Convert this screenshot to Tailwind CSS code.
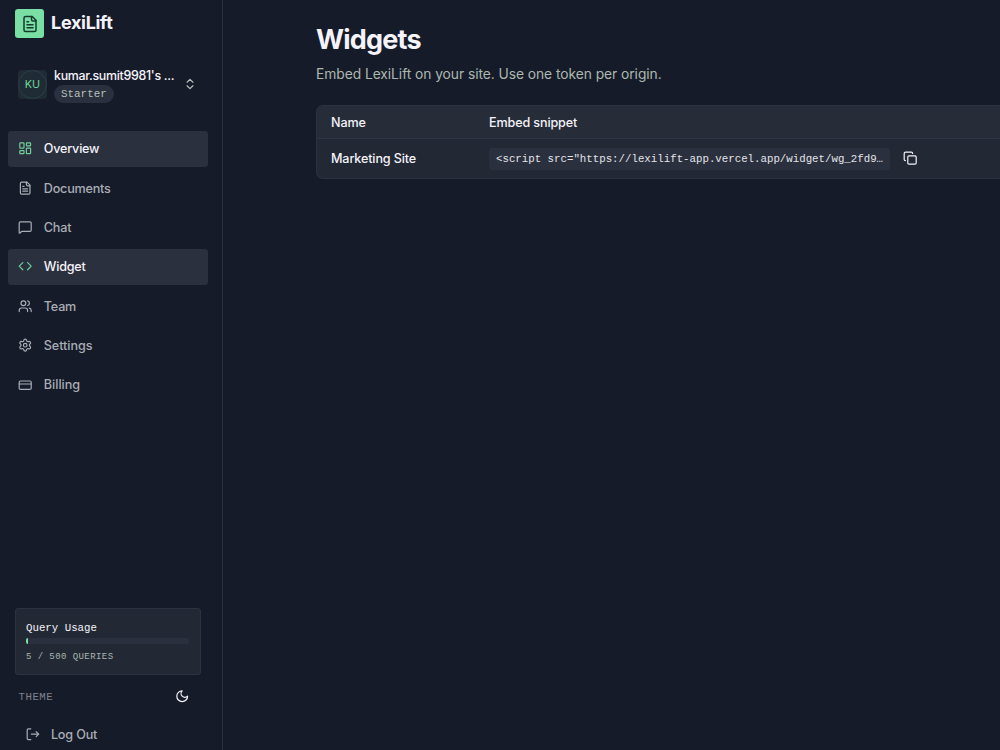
<!DOCTYPE html>
<html lang="en">
<head>
  <meta charset="UTF-8" />
  <meta name="viewport" content="width=device-width, initial-scale=1.0" />
  <title>LexiLift - Widgets</title>
  <script src="https://cdn.jsdelivr.net/npm/@tailwindcss/browser@4"></script>
</head>
<body class="flex h-screen overflow-hidden bg-[#161b2a] font-['Inter',sans-serif] text-[#f5f3fa]">

  <!-- Sidebar -->
  <aside class="flex w-[223px] shrink-0 flex-col border-r border-[#2a2f3d]">

    <!-- Logo -->
    <div class="flex items-center gap-[7px] pt-[9px] pl-[15px]">
      <div class="flex size-[29px] items-center justify-center rounded-[3px] bg-[#79dfa5]">
        <svg class="size-[18px] text-[#173a2c]" viewBox="0 0 24 24" fill="none" stroke="currentColor" stroke-width="2" stroke-linecap="round" stroke-linejoin="round"><path d="M15 2H6a2 2 0 0 0-2 2v16a2 2 0 0 0 2 2h12a2 2 0 0 0 2-2V7Z"/><path d="M14 2v4a2 2 0 0 0 2 2h4"/><path d="M10 9H8"/><path d="M16 13H8"/><path d="M16 17H8"/></svg>
      </div>
      <span class="pb-[2px] text-[18px] leading-[26px] font-bold tracking-[-0.3px]">LexiLift</span>
    </div>

    <!-- Workspace -->
    <div class="mt-[28px] flex h-[36px] items-center pl-[18px]">
      <div class="flex size-[29px] items-center justify-center rounded-[4px] bg-[#1f2c36]">
        <div class="flex size-[29px] items-center justify-center rounded-full border border-[#2c3f44] pt-[2px] text-[10.8px] text-[#72d49c]">KU</div>
      </div>
      <div class="ml-[7px] flex w-[124px] flex-col items-start pt-px">
        <span class="text-[12.4px] leading-[18px] font-medium tracking-[-0.29px] whitespace-nowrap">kumar.sumit9981's ...</span>
        <span class="flex h-[18px] items-center rounded-full bg-[#2b303e] px-[7px] pt-[2px] font-['Liberation_Mono',monospace] text-[10.9px] text-[#b5c0b8]">Starter</span>
      </div>
      <svg class="ml-[5px] size-[14px] text-[#b9c2bd]" viewBox="0 0 24 24" fill="none" stroke="currentColor" stroke-width="2" stroke-linecap="round" stroke-linejoin="round"><path d="m7 15 5 5 5-5"/><path d="m7 9 5-5 5 5"/></svg>
    </div>

    <!-- Navigation -->
    <nav class="mt-[29px] flex w-[208px] flex-col gap-[3.6px] pl-2 text-[12.6px] font-medium tracking-[-0.2px] text-[#a9adb4]">
      <a class="flex h-[35.8px] items-center gap-[11px] rounded-[3px] bg-[#2b303e] pl-[10.4px] text-[#f5f3fa]">
        <svg class="-mt-px size-[14.4px] text-[#6fcf99]" viewBox="0 0 24 24" fill="none" stroke="currentColor" stroke-width="2" stroke-linecap="round" stroke-linejoin="round"><rect width="7" height="9" x="3" y="3" rx="1"/><rect width="7" height="5" x="14" y="3" rx="1"/><rect width="7" height="9" x="14" y="12" rx="1"/><rect width="7" height="5" x="3" y="16" rx="1"/></svg>
        <span class="pt-[1.5px]">Overview</span>
      </a>
      <a class="flex h-[35.8px] items-center gap-[11px] pl-[10.4px]">
        <svg class="size-[14.4px]" viewBox="0 0 24 24" fill="none" stroke="currentColor" stroke-width="2" stroke-linecap="round" stroke-linejoin="round"><path d="M15 2H6a2 2 0 0 0-2 2v16a2 2 0 0 0 2 2h12a2 2 0 0 0 2-2V7Z"/><path d="M14 2v4a2 2 0 0 0 2 2h4"/><path d="M10 9H8"/><path d="M16 13H8"/><path d="M16 17H8"/></svg>
        <span class="pt-[1.5px]">Documents</span>
      </a>
      <a class="flex h-[35.8px] items-center gap-[11px] pl-[10.4px]">
        <svg class="size-[14.4px]" viewBox="0 0 24 24" fill="none" stroke="currentColor" stroke-width="2" stroke-linecap="round" stroke-linejoin="round"><path d="M22 17a2 2 0 0 1-2 2H6.828a2 2 0 0 0-1.414.586l-2.202 2.202A.71.71 0 0 1 2 21.286V5a2 2 0 0 1 2-2h16a2 2 0 0 1 2 2z"/></svg>
        <span class="pt-[1.5px]">Chat</span>
      </a>
      <a class="flex h-[35.8px] items-center gap-[11px] rounded-[3px] bg-[#2b303e] pl-[10.4px] text-[#f5f3fa]">
        <svg class="-mt-px size-[14.4px] text-[#6fcf99]" viewBox="0 0 24 24" fill="none" stroke="currentColor" stroke-width="2" stroke-linecap="round" stroke-linejoin="round"><path d="m16 18 6-6-6-6"/><path d="m8 6-6 6 6 6"/></svg>
        <span class="pt-px">Widget</span>
      </a>
      <a class="flex h-[35.8px] items-center gap-[11px] pl-[10.4px]">
        <svg class="size-[14.4px]" viewBox="0 0 24 24" fill="none" stroke="currentColor" stroke-width="2" stroke-linecap="round" stroke-linejoin="round"><path d="M16 21v-2a4 4 0 0 0-4-4H6a4 4 0 0 0-4 4v2"/><circle cx="9" cy="7" r="4"/><path d="M22 21v-2a4 4 0 0 0-3-3.87"/><path d="M16 3.13a4 4 0 0 1 0 7.75"/></svg>
        <span class="pt-px">Team</span>
      </a>
      <a class="flex h-[35.8px] items-center gap-[11px] pl-[10.4px]">
        <svg class="-mt-px size-[14.4px]" viewBox="0 0 24 24" fill="none" stroke="currentColor" stroke-width="2" stroke-linecap="round" stroke-linejoin="round"><path d="M9.671 4.136a2.34 2.34 0 0 1 4.659 0 2.34 2.34 0 0 0 3.319 1.915 2.34 2.34 0 0 1 2.33 4.033 2.34 2.34 0 0 0 0 3.831 2.34 2.34 0 0 1-2.33 4.033 2.34 2.34 0 0 0-3.319 1.915 2.34 2.34 0 0 1-4.659 0 2.34 2.34 0 0 0-3.32-1.915 2.34 2.34 0 0 1-2.33-4.033 2.34 2.34 0 0 0 0-3.831A2.34 2.34 0 0 1 6.35 6.051a2.34 2.34 0 0 0 3.319-1.915"/><circle cx="12" cy="12" r="3"/></svg>
        <span class="pt-[1.5px] tracking-[-0.05px]">Settings</span>
      </a>
      <a class="flex h-[35.8px] items-center gap-[11px] pl-[10.4px]">
        <svg class="-mt-px size-[14.4px]" viewBox="0 0 24 24" fill="none" stroke="currentColor" stroke-width="2" stroke-linecap="round" stroke-linejoin="round"><rect width="20" height="14" x="2" y="5" rx="2"/><path d="M2 10h20"/></svg>
        <span class="pt-px tracking-normal">Billing</span>
      </a>
    </nav>

    <!-- Usage, theme and log out -->
    <div class="mt-auto flex flex-col">
      <div class="ml-[15px] h-[67px] w-[186px] rounded-[3px] border border-[#2c323f] bg-[#222935] px-[10px] pt-[11px] font-['Liberation_Mono',monospace]">
        <div class="text-[10.75px] leading-4 font-medium">Query Usage</div>
        <div class="mt-[2px] h-[6px] w-[163px] overflow-hidden rounded-[2px] bg-[#2b303e]">
          <div class="h-full bg-[#79dfa5]" style="width: 1%"></div>
        </div>
        <div class="mt-[6px] text-[9px] leading-[15px] tracking-[0.43px] text-[#a9b5ac]">5 / 500 QUERIES</div>
      </div>
      <div class="mt-[11px] flex h-[20px] items-center justify-between pr-[32.5px] pl-[18.5px]">
        <span class="pt-[2px] font-['Liberation_Mono',monospace] text-[10.75px] tracking-[0.5px] text-[#7e828b]">THEME</span>
        <svg class="size-[14.4px]" viewBox="0 0 24 24" fill="none" stroke="currentColor" stroke-width="2" stroke-linecap="round" stroke-linejoin="round"><path d="M12 3a6 6 0 0 0 9 9 9 9 0 1 1-9-9Z"/></svg>
      </div>
      <div class="mt-[18px] mb-[6px] flex h-[20px] items-center gap-[10.5px] pl-[26px] text-[12.6px] font-medium tracking-[-0.15px] text-[#a9adb4]">
        <svg class="size-[14.4px]" viewBox="0 0 24 24" fill="none" stroke="currentColor" stroke-width="2" stroke-linecap="round" stroke-linejoin="round"><path d="m17 16 4-4-4-4"/><path d="M21 12H9"/><path d="M8 21H4a2 2 0 0 1-2-2V5a2 2 0 0 1 2-2h4"/></svg>
        <span class="pt-[2.5px]">Log Out</span>
      </div>
    </div>
  </aside>

  <!-- Main content -->
  <main class="min-w-0 flex-1 pt-[22px] pl-[93px]">
    <h1 class="text-[27px] leading-9 font-bold tracking-[-0.8px]">Widgets</h1>
    <p class="mt-[6px] text-[13.8px] leading-5 tracking-[-0.05px] text-[#acb8ae]">Embed LexiLift on your site. Use one token per origin.</p>

    <div class="mt-[21px] overflow-hidden rounded-l-[7px] border border-r-0 border-[#2c323f] bg-[#222935] text-[12.6px] font-medium tracking-[-0.13px]">
      <div class="flex h-[33px] items-center border-b border-[#2f3542] bg-[#272c39] pt-[2px] pl-[14px]">
        <div class="w-[158px]">Name</div>
        <div>Embed snippet</div>
      </div>
      <div class="flex h-[39px] items-center pl-[14px]">
        <div class="w-[158px] pt-[2px]">Marketing Site</div>
        <code class="flex h-[22px] w-[401px] items-center rounded-[3px] bg-[#2b303e] pt-px pl-[7px] font-['Liberation_Mono',monospace] text-[10.75px] font-normal tracking-normal whitespace-nowrap text-[#e4e4ea]">&lt;script src="https://lexilift-app.vercel.app/widget/wg_2fd9…</code>
        <svg class="ml-[12.5px] size-[14.4px]" viewBox="0 0 24 24" fill="none" stroke="currentColor" stroke-width="2" stroke-linecap="round" stroke-linejoin="round"><rect width="14" height="14" x="8" y="8" rx="2"/><path d="M4 16c-1.1 0-2-.9-2-2V4c0-1.1.9-2 2-2h10c1.1 0 2 .9 2 2"/></svg>
      </div>
    </div>
  </main>

</body>
</html>
